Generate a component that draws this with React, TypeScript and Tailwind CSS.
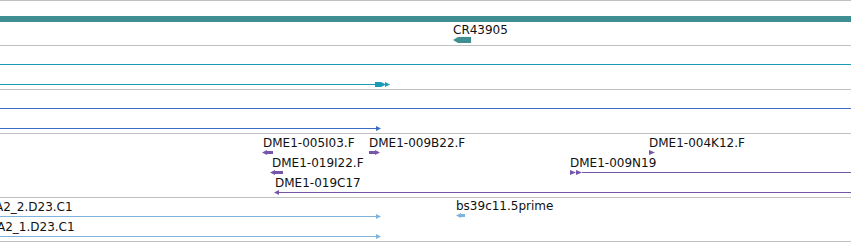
import React from 'react';

// arrow glyph: optional body + arrowhead
const Glyph: React.FC<{ w: number; dir: 'l' | 'r'; color: string; h?: number; body?: boolean; className?: string }> = ({
    w,
    dir,
    color,
    h = 5,
    body = true,
    className = '',
}) => {
    const m = h / 2;
    const pts =
        dir === 'r'
            ? body
                ? `0,1 ${w - 5},1 ${w - 5},0 ${w},${m} ${w - 5},${h} ${w - 5},${h - 1} 0,${h - 1}`
                : `0,0 ${w},${m} 0,${h}`
            : body
              ? `${w},1 5,1 5,0 0,${m} 5,${h} 5,${h - 1} ${w},${h - 1}`
              : `${w},0 0,${m} ${w},${h}`;
    return (
        <svg className={`shrink-0 ${className}`} width={w} height={h} viewBox={`0 0 ${w} ${h}`}>
            <polygon points={pts} fill={color} />
        </svg>
    );
};

// a labelled feature placed at its genome position on the track canvas
const Feature: React.FC<{ name: string; pos: string; children: React.ReactNode; wide?: boolean }> = ({
    name,
    pos,
    children,
    wide = false,
}) => (
    <div className={`absolute flex flex-col items-start gap-px ${pos}`}>
        <span className="whitespace-nowrap text-[12px] leading-[12px] text-[#111]">{name}</span>
        <div className={wide ? 'flex items-center self-stretch' : 'flex items-center'}>{children}</div>
    </div>
);

const Track: React.FC<{ h: string; children: React.ReactNode }> = ({ h, children }) => (
    <div className={`relative shrink-0 overflow-hidden border-b border-[#c0c0c0] ${h}`}>{children}</div>
);

const App: React.FC = () => {
    return (
        <div className="flex flex-col w-[851px] h-[242px] bg-white overflow-hidden border-t border-[#c0c0c0] font-['DejaVu_Sans',Verdana,sans-serif]">
            {/* gene track */}
            <Track h="h-[45px]">
                <div className="absolute inset-x-0 top-[15px] h-[6px] bg-[#3f8f92]" />
                <Feature name="CR43905" pos="left-[453px] top-[23px]">
                    <svg width="18" height="6" viewBox="0 0 18 6">
                        <polygon points="18,0 5,0 0,3 5,6 18,6" fill="#3f8f92" />
                    </svg>
                </Feature>
            </Track>

            {/* transcripts */}
            <Track h="h-[44px]">
                <div className="absolute inset-x-0 top-[18px] h-px bg-[#1a9bb3]" />
                <div className="absolute left-0 top-[36px] flex items-center">
                    <div className="w-[375px] h-px bg-[#1a9bb3]" />
                    <div className="w-[6px] h-[5px] bg-[#1a9bb3]" />
                    <Glyph w={5} dir="r" body={false} color="#1a9bb3" />
                    <Glyph w={5} dir="r" body={false} color="#1a9bb3" className="-ml-px" />
                </div>
            </Track>

            <Track h="h-[44px]">
                <div className="absolute inset-x-0 top-[18px] h-px bg-[#3a6ec6]" />
                <div className="absolute left-0 top-[36px] flex items-center">
                    <div className="w-[376px] h-px bg-[#3a6ec6]" />
                    <Glyph w={5} dir="r" body={false} color="#3a6ec6" />
                </div>
            </Track>

            {/* clone ends */}
            <Track h="h-[64px]">
                <Feature name="DME1-005I03.F" pos="left-[263px] top-[3px]">
                    <Glyph w={11} dir="l" color="#7656ab" className="-ml-px" />
                </Feature>
                <Feature name="DME1-009B22.F" pos="left-[369px] top-[3px]">
                    <Glyph w={11} dir="r" color="#7656ab" />
                </Feature>
                <Feature name="DME1-004K12.F" pos="left-[649px] top-[3px]">
                    <Glyph w={6} dir="r" body={false} color="#7656ab" />
                </Feature>
                <Feature name="DME1-019I22.F" pos="left-[272px] top-[23px]">
                    <Glyph w={13} dir="l" color="#7656ab" className="-ml-[2px]" />
                </Feature>
                <Feature name="DME1-009N19" pos="left-[570px] right-0 top-[23px]" wide>
                    <Glyph w={6} dir="r" body={false} color="#7656ab" />
                    <Glyph w={6} dir="r" body={false} color="#7656ab" />
                    <div className="flex-1 h-px bg-[#7656ab]" />
                </Feature>
                <Feature name="DME1-019C17" pos="left-[275px] right-0 top-[43px]" wide>
                    <Glyph w={5} dir="l" body={false} color="#7656ab" className="-ml-px" />
                    <div className="flex-1 h-px bg-[#7656ab]" />
                </Feature>
            </Track>

            {/* cDNA */}
            <Track h="h-[44px]">
                <Feature name="A2_2.D23.C1" pos="-left-[5px] top-[3px]">
                    <div className="w-[376px] h-px ml-[5px] bg-[#7fb3de]" />
                    <Glyph w={5} dir="r" body={false} color="#7fb3de" />
                </Feature>
                <Feature name="A2_1.D23.C1" pos="-left-[3px] top-[23px]">
                    <div className="w-[376px] h-px ml-[3px] bg-[#7fb3de]" />
                    <Glyph w={5} dir="r" body={false} color="#7fb3de" />
                </Feature>
                <Feature name="bs39c11.5prime" pos="left-[456px] top-[2px]">
                    <Glyph w={9} dir="l" color="#7fb3de" />
                </Feature>
            </Track>
        </div>
    );
};

export default App;
